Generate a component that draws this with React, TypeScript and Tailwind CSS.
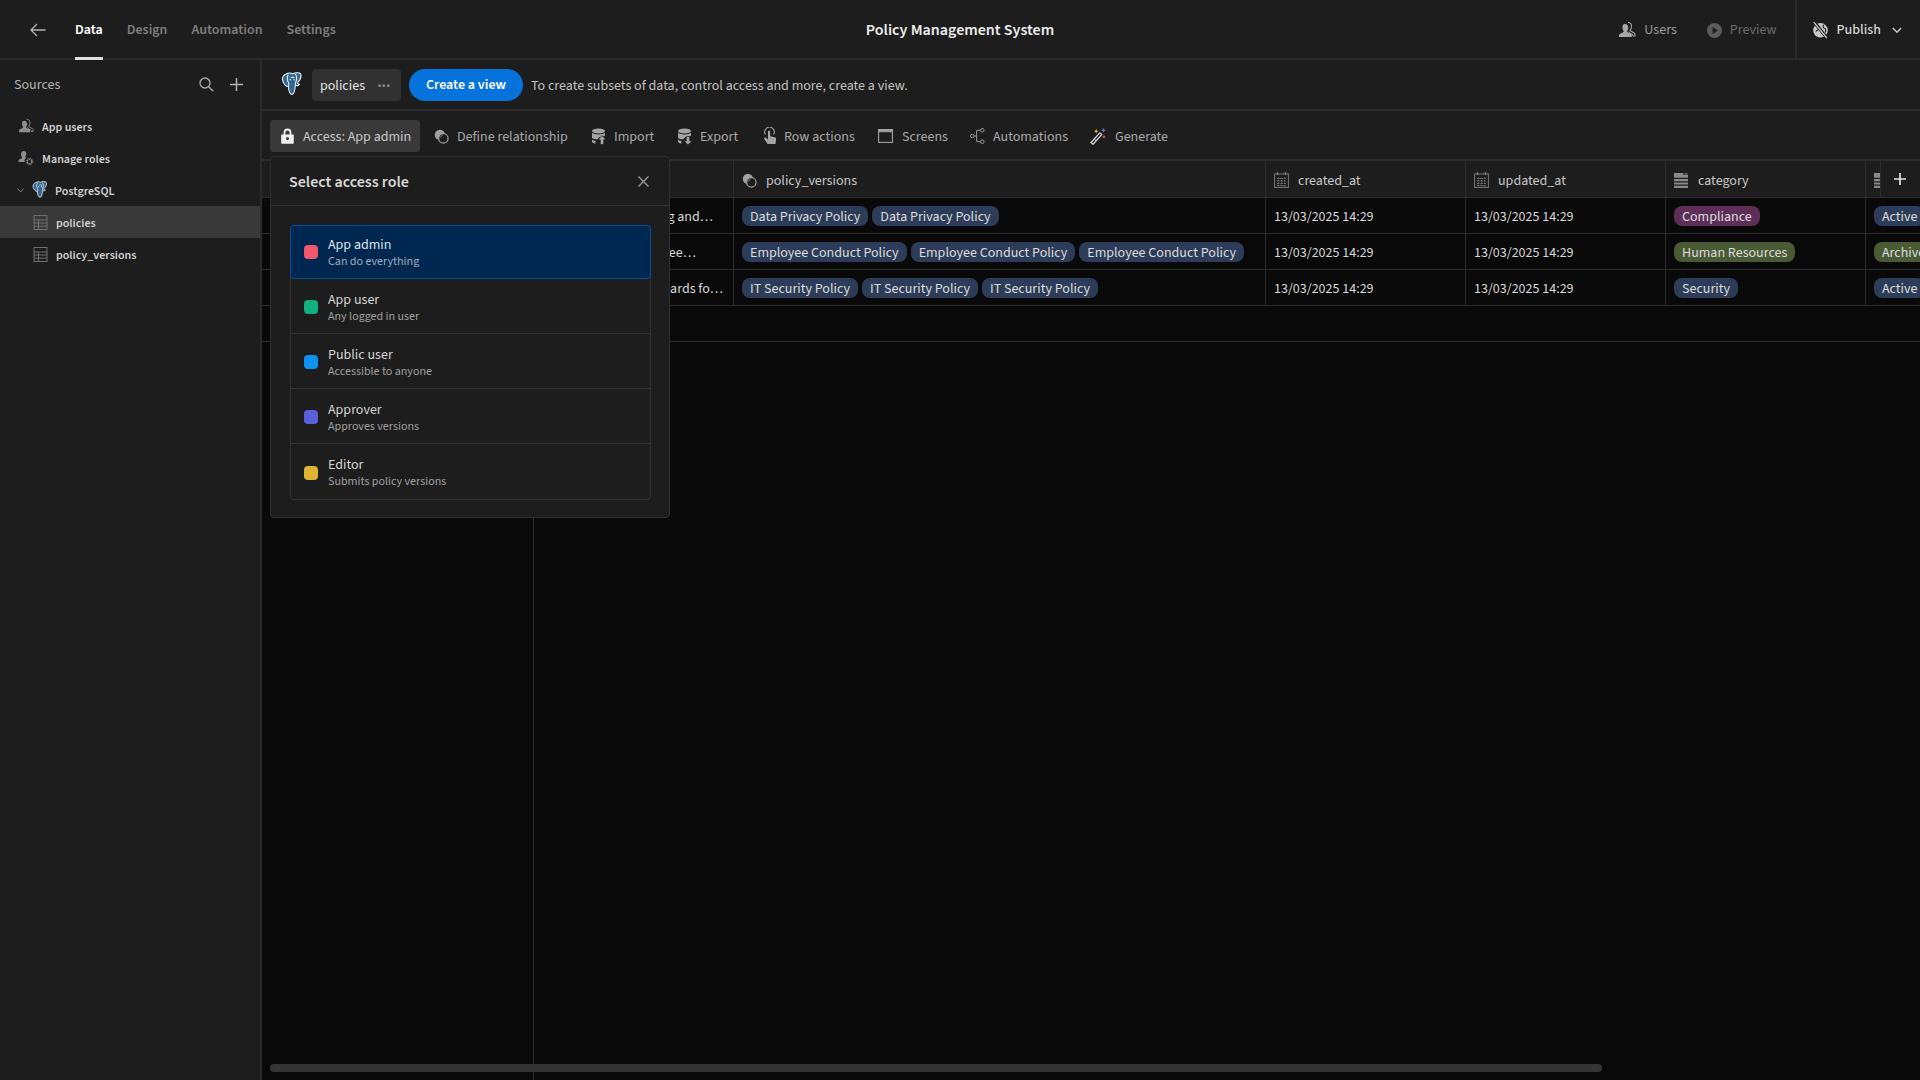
import React from "react";

const Pg = ({ s = 20 }: { s?: number }) => (
  <svg width={s} height={s * 1.08} viewBox="0 0 24 26" fill="none">
    <path d="M5 2.500C2.500 3.500 1 6.500 1.800 9.500 2.800 12.800 5 16 8 15.800c.3 3 .7 8 3.800 8.700 3 .2 3.500-5 3.900-10 1.500.6 3.600.6 4.300-1-1.500-.4-2-1-1.700-2.200 2.400-2.600 4.500-6.500 3-9.300C20.500.4 15.500.3 12.800 2 10.500.7 7.500 1 5 2.500z" fill="#336791" stroke="#eef3f7" strokeWidth="1.200" />
    <path d="M7.800 2.800C6.300 6.500 6.800 9.800 8.400 12.300c.5 1 .2 2.300-.4 3.500M15.700 2.300c1.600 2.500 1.800 5.600.6 8.300-.5 1.200-.8 2.300-.6 3.500M10.500 6.200c1.200-.6 3-.6 4.300 0" stroke="#eef3f7" strokeWidth="1.100" />
    <circle cx="10" cy="8.500" r=".8" fill="#eef3f7" />
    <circle cx="14.300" cy="8.500" r=".8" fill="#eef3f7" />
  </svg>
);
const Users = ({ s = 18, c = "#a8a8a8" }: { s?: number; c?: string }) => (
  <svg width={s} height={s} viewBox="0 0 18 18">
    <path d="M10 1.500c2.400 0 3.700 1.800 3.500 4-.1 1.500-.8 2.900-1.400 3.700.2 1 1.500 1.500 2.800 2 1.200.5 2.100 1 2.100 2.300v1.500h-1.800c-.3-1.700-2-2.300-3.800-3l-.6-1.600" fill="none" stroke={c} strokeWidth="1.100" />
    <path d="M7 3c2.300 0 3.500 1.800 3.300 3.900-.1 1.300-.7 2.500-1.300 3.300.1 1.100 1.600 1.600 3 2.200 1 .4 1.800.9 1.800 2.100V16H1v-1.500c0-1.200.8-1.700 1.800-2.100 1.400-.6 2.900-1.100 3-2.200-.6-.8-1.200-2-1.300-3.300C4.300 4.800 4.800 3 7 3z" fill={c} />
  </svg>
);
const Roles = () => (
  <svg width="18" height="18" viewBox="0 0 18 18">
    <path d="M6.500 1c2 0 3 1.500 2.900 3.300-.1 1.200-.6 2.300-1.200 3 .1.500.4.800.8 1.100a5 5 0 0 0-1.300 5.100H.5v-1.300c0-1 .7-1.400 1.500-1.800 1.200-.5 2.500-1 2.600-1.900-.5-.7-1-1.800-1.100-3C3.400 2.600 4.500 1 6.500 1z" fill="#8e8e8e" />
    <circle cx="13" cy="13" r="2.700" fill="none" stroke="#8e8e8e" strokeWidth="1.500" strokeDasharray="2 .6" />
    <circle cx="13" cy="13" r="3.800" fill="none" stroke="#8e8e8e" strokeWidth="1" strokeDasharray="1.200 1.800" />
  </svg>
);
const TableIcon = () => (
  <svg width="15" height="15" viewBox="0 0 15 15" fill="none" stroke="#6f6f6f" strokeWidth="1">
    <rect x="1" y=".5" width="13" height="14" />
    <path d="M1 5h13M1 8h13M1 11.200h13M5.500 5v9.500" />
  </svg>
);
const Rel = () => (
  <svg width="15" height="15" viewBox="0 0 16 16">
    <circle cx="6.300" cy="6.300" r="5.500" fill="#a0a0a0" />
    <circle cx="10" cy="10" r="5" fill="#1d1d1d" stroke="#a0a0a0" strokeWidth="1.300" />
    <path d="M6.500 9.500a3.500 3.500 0 0 1 3-3l-3 3z" fill="#a0a0a0" />
  </svg>
);
const Db = ({ up }: { up: boolean }) => (
  <svg width="16" height="17" viewBox="0 0 16 17" fill="#a4a4a4">
    <ellipse cx="7.500" cy="3" rx="6.500" ry="2.400" />
    <path d="M1 4.800c1.500 1.200 3.700 1.600 6.500 1.600s5-.4 6.500-1.600v2.700c-1 .9-3 1.500-5.500 1.600L6 11.500c-2-.1-3.800-.6-5-1.500V4.800z" />
    <path d="M1 11.500c.8.800 2 1.200 3.500 1.400v2.700C3 15.400 1.500 14.800 1 14v-2.500z" />
    {up ? <path d="M11 7.500l4 4.200h-2.300v4.800H9.300v-4.800H7l4-4.200z" stroke="#1d1d1d" strokeWidth=".7" /> : <path d="M9.300 8.500h3.400v4.300H15l-4 4.200-4-4.200h2.300V8.500z" stroke="#1d1d1d" strokeWidth=".7" />}
  </svg>
);
const Hand = () => (
  <svg width="14" height="18" viewBox="0 0 14 18" fill="none">
    <path d="M2.400 7.500a4.800 4.800 0 1 1 8.200 0" stroke="#a4a4a4" strokeWidth="1.100" />
    <path d="M5 4.700c0-1.300 2.200-1.300 2.200 0v4.500l4.600 1c1 .3 1.400 1 1.300 1.900L12.500 17H4.600L1.400 12.200c-.7-1.200.7-2.300 1.700-1.400L5 12.500V4.700z" fill="#a4a4a4" />
  </svg>
);
const Screen = () => (
  <svg width="15" height="14" viewBox="0 0 15 14" fill="none" stroke="#a4a4a4">
    <rect x=".6" y=".6" width="13.800" height="12.800" strokeWidth="1.100" />
    <rect x=".6" y=".6" width="13.800" height="2.200" fill="#a4a4a4" strokeWidth=".8" />
  </svg>
);
const Auto = () => (
  <svg width="15" height="16" viewBox="0 0 15 16" fill="none" stroke="#9a9a9a" strokeWidth="1">
    <circle cx="2.300" cy="8" r="1.800" />
    <circle cx="12.300" cy="2.300" r="1.800" />
    <circle cx="12.300" cy="13.700" r="1.800" />
    <path d="M4.100 8h2.500V2.800c0-.4.200-.5.500-.5h3M6.600 8v5.200c0 .3.200.5.500.5h3.400" />
  </svg>
);
const Wand = () => (
  <svg width="17" height="17" viewBox="0 0 17 17">
    <path d="M1 14.500 9.800 4.800l2 1.800L3 16.300z" fill="none" stroke="#d4d4d4" strokeWidth="1.300" />
    <path d="M4 10.800l2 1.900" stroke="#d4d4d4" strokeWidth="1" />
    <path d="M6.200 1l.7 1.500 1.500.7-1.500.7-.7 1.500-.7-1.500L4 3.200l1.500-.7z" fill="#d6b93f" />
    <path d="M13.500 0l.7 1.600 1.500.6-1.500.7-.7 1.600-.7-1.600-1.500-.7 1.500-.6z" fill="#6a78e0" />
    <path d="M14 7l.6 1.300 1.400.6-1.400.6-.6 1.300-.6-1.300-1.400-.6 1.400-.6z" fill="#e8566a" />
  </svg>
);
const Cal = () => (
  <svg width="15" height="16" viewBox="0 0 15 16" fill="none" stroke="#7c7c7c">
    <rect x=".6" y="2" width="13.800" height="13.400" strokeWidth="1" />
    <path d="M3.500 0v3M11.500 0v3" strokeWidth="1.300" />
    <path d="M3 6.500h9M3 9h9M3 11.500h9M3 13.500h9M4.500 5.500v9M7.500 5.500v9M10.500 5.500v9" strokeWidth=".9" strokeDasharray="1.300 1.200" />
  </svg>
);
const Cat = () => (
  <svg width="14" height="15" viewBox="0 0 14 15" fill="#8a8a8a">
    <path d="M0 0h9.500v2H14v2.700H0V0z" />
    <path d="M0 6h14v2.200H0zM0 9.500h14v2H0zM0 12.800h14V15H0z" />
    <rect x="10.500" y=".3" width="3" height="1.200" />
  </svg>
);
const Pub = () => (
  <svg width="17" height="18" viewBox="0 0 17 18" fill="none">
    <circle cx="8.500" cy="9.300" r="7.300" fill="#c8c8c8" />
    <path d="M5 3c1 2.500 3 2.500 2.700 4.500-.2 1.300-3 1-3.700 3M12 3.800c-1.500 1.200-1 3.200.6 3.500 1.200.3 1.500 2.500.6 4" stroke="#1d1d1d" strokeWidth="1.100" />
    <path d="M2 1l13 16" stroke="#1d1d1d" strokeWidth="3.200" />
    <path d="M1.800 1.200l13 15.800" stroke="#c8c8c8" strokeWidth="1.300" />
  </svg>
);

const tools = [
  { label: "Define relationship", box: "w-[157px]", gap: "w-[23px]", icon: <Rel /> },
  { label: "Import", box: "w-[86px]", gap: "w-[23px]", icon: <Db up /> },
  { label: "Export", box: "w-[86px]", gap: "w-[23px]", icon: <Db up={false} /> },
  { label: "Row actions", box: "w-[115px]", gap: "w-[21px]", icon: <Hand /> },
  { label: "Screens", box: "w-[92px]", gap: "w-[24px]", icon: <Screen /> },
  { label: "Automations", box: "w-[120px]", gap: "w-[23px]", icon: <Auto /> },
  { label: "Generate", box: "w-[90px]", gap: "w-[25px]", icon: <Wand /> },
];

const roles = [
  { n: "App admin", d: "Can do everything", c: "bg-[#f0566c]", sel: true },
  { n: "App user", d: "Any logged in user", c: "bg-[#12b07f]", sel: false },
  { n: "Public user", d: "Accessible to anyone", c: "bg-[#0d93f2]", sel: false },
  { n: "Approver", d: "Approves versions", c: "bg-[#5a60dc]", sel: false },
  { n: "Editor", d: "Submits policy versions", c: "bg-[#dcb534]", sel: false },
];

const blue = "bg-[#2c3c59]";
const rows = [
  { t: "Guidelines for data handling and…", pr: "pr-[20px]", p: ["Data Privacy Policy", "Data Privacy Policy"], cat: "Compliance", cc: "bg-[#5c2e58]", st: "Active", sc: blue },
  { t: "Standards of conduct for all ee…", pr: "pr-[37px]", p: ["Employee Conduct Policy", "Employee Conduct Policy", "Employee Conduct Policy"], cat: "Human Resources", cc: "bg-[#4a5a35]", st: "Archived", sc: "bg-[#4a5a35]" },
  { t: "Information security standards fo…", pr: "pr-[10px]", p: ["IT Security Policy", "IT Security Policy", "IT Security Policy"], cat: "Security", cc: blue, st: "Active", sc: blue },
];

const Pill = ({ c, children }: { c: string; children: React.ReactNode }) => (
  <span className={`h-5 px-2 pt-[3px] rounded-lg flex items-center whitespace-nowrap text-[14px] text-[#dcdcdc] shrink-0 ${c}`}>{children}</span>
);

const Head = ({ w, icon, label, gap }: { w: string; icon: React.ReactNode; label?: string; gap: string }) => (
  <div className={`${w} shrink-0 h-full flex items-center border-r border-[#2c2c2c] pl-2 pt-[2px]`}>
    <span className={`${gap} flex shrink-0`}>{icon}</span>
    {label && <span className="text-[14px] text-[#c8c8c8] pt-[2px]">{label}</span>}
  </div>
);

export default function App() {
  return (
    <div className="relative w-[1920px] h-[1080px] overflow-hidden bg-[#1d1d1d] text-[14px] font-['Source_Sans_3','Lato',sans-serif] flex flex-col">
      {/* top bar */}
      <header className="h-[60px] shrink-0 border-b-2 border-[#2b2b2b] grid grid-cols-[1fr_auto_1fr] items-center">
        <div className="flex items-center h-full pl-[30px]">
          <svg width="16" height="14" viewBox="0 0 16 14" fill="none" stroke="#b4b4b4" strokeWidth="1.300">
            <path d="M15.500 7H1M7 1 1 7l6 6" />
          </svg>
          <nav className="flex h-full ml-[29px] gap-6 text-[14px] font-semibold text-[#7e7e7e]">
            <span className="h-[60px] flex items-center text-white border-b-[3px] border-[#e0e0e0] pt-[3px]">Data</span>
            <span className="flex items-center">Design</span>
            <span className="flex items-center">Automation</span>
            <span className="flex items-center">Settings</span>
          </nav>
        </div>
        <h1 className="text-[16px] font-semibold text-[#ececec]">Policy Management System</h1>
        <div className="flex items-center justify-end h-full text-[14px]">
          <span className="flex items-center gap-[8px] text-[#9a9a9a]"><Users s={18} />Users</span>
          <span className="flex items-center gap-2 ml-[30px] text-[#6a6a6a]">
            <svg width="15" height="15" viewBox="0 0 15 15"><circle cx="7.500" cy="7.500" r="7.500" fill="#5c5c5c" /><path d="M5.500 4v7l5.500-3.500z" fill="#1d1d1d" /></svg>
            Preview
          </span>
          <span className="flex items-center h-full ml-[18px] pl-[15px] pr-[18px] border-l-2 border-[#2b2b2b] text-[#d4d4d4] font-medium">
            <Pub />
            <span className="ml-2">Publish</span>
            <svg className="ml-[11px]" width="10" height="7" viewBox="0 0 10 7" fill="none" stroke="#c8c8c8" strokeWidth="1.500"><path d="M.8 1l4.200 4.200L9.200 1" /></svg>
          </span>
        </div>
      </header>

      <div className="flex flex-1 min-h-0">
        {/* sidebar */}
        <aside className="w-[262px] shrink-0 border-r-2 border-[#2b2b2b] flex flex-col">
          <div className="h-[48px] flex items-center pl-[14px] pr-[17px] text-[14px] text-[#b4b4b4]">
            <span className="flex-1 pt-[2px]">Sources</span>
            <svg width="15" height="15" viewBox="0 0 15 15" fill="none" stroke="#a8a8a8" strokeWidth="1.400" className="mr-[16px]"><circle cx="6" cy="6" r="5" /><path d="m9.700 9.700 4.500 4.500" /></svg>
            <svg width="13" height="13" viewBox="0 0 13 13" fill="none" stroke="#b4b4b4" strokeWidth="1.500"><path d="M6.500 0v13M0 6.500h13" /></svg>
          </div>
          <div className="flex flex-col mt-[2px] text-[12px] font-semibold text-[#d0d0d0]">
            <div className="h-8 flex items-center pl-[18px] gap-2"><Users s={16} c="#8e8e8e" /><span className="pt-[4px]">App users</span></div>
            <div className="h-8 flex items-center pl-[18px] gap-2"><span className="flex w-4"><Roles /></span><span className="pt-[4px]">Manage roles</span></div>
            <div className="h-8 flex items-center pl-[17px]">
              <svg width="7" height="5" viewBox="0 0 7 5" fill="none" stroke="#7a7a7a"><path d="M.5.500 3.500 4l3-3.500" /></svg>
              <span className="ml-[8px] flex"><Pg s={16} /></span>
              <span className="ml-[7px] pt-[4px]">PostgreSQL</span>
            </div>
            <div className="h-8 flex items-center pl-[33px] gap-2 bg-[#393939]"><TableIcon /><span className="pt-[4px]">policies</span></div>
            <div className="h-8 flex items-center pl-[33px] gap-2"><TableIcon /><span className="pt-[4px]">policy_versions</span></div>
          </div>
        </aside>

        {/* main */}
        <main className="flex-1 min-w-0 flex flex-col">
          <div className="h-[51px] shrink-0 border-b-2 border-[#2b2b2b] flex items-center pl-[19px] pt-[1px]">
            <span className="flex -mt-[3px]"><Pg s={22} /></span>
            <span className="ml-[9px] w-[89px] h-8 rounded bg-[#313131] flex items-center pl-2 text-[#e4e4e4]">
              <span className="flex-1 pt-[2px]">policies</span>
              <span className="mr-[10px] text-[#8a8a8a] text-[10px] tracking-[1px] font-bold">•••</span>
            </span>
            <button className="ml-2 w-[114px] h-8 rounded-full bg-[#0672dc] text-white font-semibold text-[14px]">Create a view</button>
            <span className="ml-2 text-[#c0c0c0] pt-[2px]">To create subsets of data, control access and more, create a view.</span>
          </div>
          <div className="h-[50px] shrink-0 border-b-2 border-[#2b2b2b] flex items-center pl-2 pt-[2px] text-[#a8a8a8]">
            <span className="w-[150px] h-8 rounded bg-[#393939] flex items-center pl-[11px] text-[#c8c8c8]">
              <svg width="13" height="16" viewBox="0 0 13 16" className="mr-[9px] shrink-0"><path d="M3.500 7V4.500a3 3 0 0 1 6 0V7" fill="none" stroke="#f0f0f0" strokeWidth="1.800" /><path d="M1 6.500h11c.5 0 .8.300.8.800V15c0 .5-.3.800-.8.800H1c-.5 0-.8-.3-.8-.8V7.300c0-.5.300-.8.800-.8z" fill="#f0f0f0" /><circle cx="6.500" cy="10.500" r="1.500" fill="#393939" /></svg>
              <span className="whitespace-nowrap pt-[2px]">Access: App admin</span>
            </span>
            <span className="ml-[14px] flex">
              {tools.map((t) => (
                <span key={t.label} className={`${t.box} shrink-0 flex items-center`}>
                  <span className={`${t.gap} shrink-0 flex items-center`}>{t.icon}</span>
                  <span className="whitespace-nowrap pt-[2px]">{t.label}</span>
                </span>
              ))}
            </span>
          </div>
          {/* table */}
          <div className="flex-1 min-h-0 flex bg-[#090909]">
            <div className="w-[272px] shrink-0 border-r border-[#2c2c2c] flex flex-col">
              <div className="h-[37px] bg-[#1d1d1d] border-b border-[#2c2c2c]" />
              <div className="h-9 border-b border-[#2c2c2c]" />
              <div className="h-9 border-b border-[#2c2c2c]" />
              <div className="h-9 border-b border-[#2c2c2c]" />
              <div className="h-9 border-b border-[#2c2c2c]" />
            </div>
            <div className="flex-1 min-w-0 overflow-hidden flex flex-col">
              <div className="h-[37px] shrink-0 bg-[#1d1d1d] border-b border-[#2c2c2c] flex">
                <div className="w-[200px] shrink-0 border-r border-[#2c2c2c]" />
                <Head w="w-[532px]" gap="w-[24px]" icon={<Rel />} label="policy_versions" />
                <Head w="w-[200px]" gap="w-[24px]" icon={<Cal />} label="created_at" />
                <Head w="w-[200px]" gap="w-[24px]" icon={<Cal />} label="updated_at" />
                <Head w="w-[200px]" gap="w-[24px]" icon={<Cat />} label="category" />
                <Head w="w-[200px]" gap="w-[24px]" icon={<Cat />} />
              </div>
              {rows.map((r) => (
                <div key={r.cat} className="h-9 shrink-0 border-b border-[#2c2c2c] flex text-[14px] text-[#d8d8d8]">
                  <div className={`w-[200px] shrink-0 border-r border-[#2c2c2c] flex items-center justify-end overflow-hidden pt-[3px] whitespace-nowrap ${r.pr}`}>{r.t}</div>
                  <div className="w-[532px] shrink-0 border-r border-[#2c2c2c] flex items-center gap-1 pl-2">
                    {r.p.map((x, i) => <Pill key={i} c={blue}>{x}</Pill>)}
                  </div>
                  <div className="w-[200px] shrink-0 border-r border-[#2c2c2c] flex items-center pl-2 pt-[3px]">13/03/2025 14:29</div>
                  <div className="w-[200px] shrink-0 border-r border-[#2c2c2c] flex items-center pl-2 pt-[3px]">13/03/2025 14:29</div>
                  <div className="w-[200px] shrink-0 border-r border-[#2c2c2c] flex items-center pl-2"><Pill c={r.cc}>{r.cat}</Pill></div>
                  <div className="w-[200px] shrink-0 flex items-center pl-2"><Pill c={r.sc}>{r.st}</Pill></div>
                </div>
              ))}
              <div className="h-9 shrink-0 border-b border-[#2c2c2c]" />
            </div>
          </div>
        </main>
      </div>

      {/* add column button */}
      <div className="absolute right-0 top-[161px] w-10 h-9 pr-[1px] bg-[#1d1d1d] border-l border-[#2c2c2c] flex items-center justify-center">
        <svg width="14" height="14" viewBox="0 0 14 14" fill="none" stroke="#e4e4e4" strokeWidth="1.700"><path d="M7 1v12M1 7h12" /></svg>
      </div>

      {/* scrollbar */}
      <div className="absolute left-[270px] top-[1064px] w-[1332px] h-2 rounded-full bg-[#343434]" />

      {/* popover */}
      <div className="absolute left-[270px] top-[156px] w-[400px] h-[362px] rounded border border-[#2f2f2f] bg-[#1d1d1d] flex flex-col">
        <div className="h-[49px] shrink-0 border-b border-[#333] flex items-center pl-[18px] pr-[20px] pt-[1px]">
          <span className="flex-1 text-[16px] font-semibold text-[#d8d8d8]">Select access role</span>
          <svg width="11" height="11" viewBox="0 0 11 11" fill="none" stroke="#9a9a9a" strokeWidth="1.400"><path d="m.5.500 10 10M10.500.500l-10 10" /></svg>
        </div>
        <div className="ml-[19px] w-[361px] mt-[19px] rounded border border-[#333] flex flex-col">
          {roles.map((r, i) => (
            <div key={r.n} className={r.sel ? "h-[54px] -m-px mb-0 rounded bg-[#002750] border border-[#0a4f96] flex items-center pl-[13px]" : `h-[55px] flex items-center pl-[13px] pt-[2px] ${i < roles.length - 1 ? "border-b border-[#333]" : ""}`}>
              <span className={`w-[14px] h-[14px] rounded-[4px] shrink-0 ${r.c}`} />
              <span className="ml-[10px] flex flex-col pt-[2px]">
                <span className={`text-[14px] leading-[17px] ${r.sel ? "text-[#dde3ea]" : "text-[#d4d4d4]"}`}>{r.n}</span>
                <span className={`text-[12px] leading-[16px] ${r.sel ? "text-[#a0aebd]" : "text-[#a0a0a0]"}`}>{r.d}</span>
              </span>
            </div>
          ))}
        </div>
      </div>
    </div>
  );
}
